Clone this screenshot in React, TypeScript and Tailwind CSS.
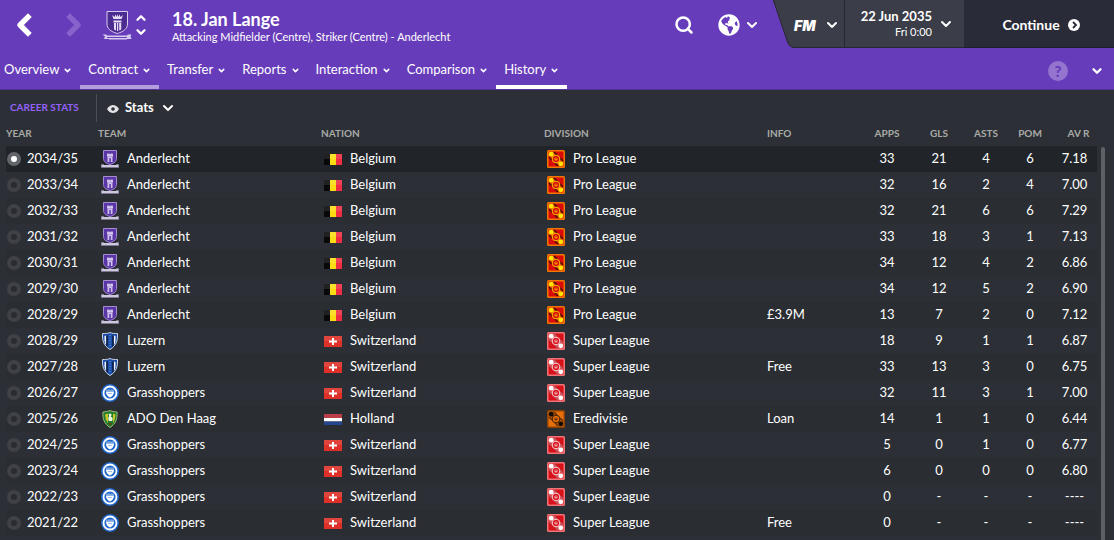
import { useState } from 'react';
import { ChevronDown, ChevronLeft, ChevronRight, ChevronUp, Search } from 'lucide-react';
import { FaGlobeAmericas } from 'react-icons/fa';

type Club = 'Anderlecht' | 'Luzern' | 'Grasshoppers' | 'ADO Den Haag';
type Nation = 'Belgium' | 'Switzerland' | 'Holland';
type Division = 'Pro League' | 'Super League' | 'Eredivisie';

interface Season {
  year: string;
  team: Club;
  nation: Nation;
  division: Division;
  info: string;
  stats: [string, string, string, string, string];
}

const seasons: Season[] = [
  { year: '2034/35', team: 'Anderlecht', nation: 'Belgium', division: 'Pro League', info: '', stats: ['33', '21', '4', '6', '7.18'] },
  { year: '2033/34', team: 'Anderlecht', nation: 'Belgium', division: 'Pro League', info: '', stats: ['32', '16', '2', '4', '7.00'] },
  { year: '2032/33', team: 'Anderlecht', nation: 'Belgium', division: 'Pro League', info: '', stats: ['32', '21', '6', '6', '7.29'] },
  { year: '2031/32', team: 'Anderlecht', nation: 'Belgium', division: 'Pro League', info: '', stats: ['33', '18', '3', '1', '7.13'] },
  { year: '2030/31', team: 'Anderlecht', nation: 'Belgium', division: 'Pro League', info: '', stats: ['34', '12', '4', '2', '6.86'] },
  { year: '2029/30', team: 'Anderlecht', nation: 'Belgium', division: 'Pro League', info: '', stats: ['34', '12', '5', '2', '6.90'] },
  { year: '2028/29', team: 'Anderlecht', nation: 'Belgium', division: 'Pro League', info: '£3.9M', stats: ['13', '7', '2', '0', '7.12'] },
  { year: '2028/29', team: 'Luzern', nation: 'Switzerland', division: 'Super League', info: '', stats: ['18', '9', '1', '1', '6.87'] },
  { year: '2027/28', team: 'Luzern', nation: 'Switzerland', division: 'Super League', info: 'Free', stats: ['33', '13', '3', '0', '6.75'] },
  { year: '2026/27', team: 'Grasshoppers', nation: 'Switzerland', division: 'Super League', info: '', stats: ['32', '11', '3', '1', '7.00'] },
  { year: '2025/26', team: 'ADO Den Haag', nation: 'Holland', division: 'Eredivisie', info: 'Loan', stats: ['14', '1', '1', '0', '6.44'] },
  { year: '2024/25', team: 'Grasshoppers', nation: 'Switzerland', division: 'Super League', info: '', stats: ['5', '0', '1', '0', '6.77'] },
  { year: '2023/24', team: 'Grasshoppers', nation: 'Switzerland', division: 'Super League', info: '', stats: ['6', '0', '0', '0', '6.80'] },
  { year: '2022/23', team: 'Grasshoppers', nation: 'Switzerland', division: 'Super League', info: '', stats: ['0', '-', '-', '-', '----'] },
  { year: '2021/22', team: 'Grasshoppers', nation: 'Switzerland', division: 'Super League', info: 'Free', stats: ['0', '-', '-', '-', '----'] },
];

const tabs = ['Overview', 'Contract', 'Transfer', 'Reports', 'Interaction', 'Comparison', 'History'];

const divisionColors: Record<Division, { border: string; base: string; mark: string; line: string }> = {
  'Pro League': { border: '#f07800', base: '#d80a0a', mark: '#ffe600', line: '#4a0a04' },
  'Super League': { border: '#ef7478', base: '#d8101a', mark: '#ffffff', line: '#b85a60' },
  Eredivisie: { border: '#8a4206', base: '#e8700a', mark: '#140a04', line: '#6a3206' },
};

function HeaderCrest() {
  return (
    <svg viewBox="0 0 30 30" className="w-[30px] h-[30px]" fill="none">
      <path d="M5 1.500h20.500v12.500c0 4.500-3.500 7.500-10.200 9.500C8.500 21.500 5 18.500 5 14z" fill="#4d2c91" stroke="#d8ccee" />
      <path d="M10 5l1.500 4h8L21 5l-2.500 2-1-2.500-1.200 2.500-.8-3-.8 3-1.200-2.500-1 2.500z" fill="#e6def5" />
      <path d="M11.500 10.500h8v2h-8zM12 13h2v7.500l-2-1zM15 13h1.200v8H15zM17.200 13h2v6.500l-2 1z" fill="#e6def5" />
      <path d="M.5 24.500h4v1h21v-1h4l-1 2 1 2.500h-4.500v.5h-18V29h-5l1-2.500z" fill="#d8ccee" />
      <path d="M5 27.500h20" stroke="#673cba" />
    </svg>
  );
}

function ClubBadge({ club }: { club: Club }) {
  if (club === 'Anderlecht') {
    return (
      <svg viewBox="0 0 18 18" className="w-[18px] h-[18px]">
        <path d="M2.500.5h13v8c0 3-2.200 4.800-6.500 6C4.700 13.300 2.500 11.500 2.500 8.500z" fill="#5a35a5" stroke="#a48dd0" />
        <path d="M6 3l1 1.500L7.800 3 9 4.500 10.200 3l.8 1.500L12 3v3.500H6z" fill="#d5c8ee" />
        <path d="M6.500 6.500h5v5.500H9.800V8H8.300v4H6.500z" fill="#cfc0ec" />
        <path d="M0 14.500h3v.5h12v-.5h3l-.5 1.500.5 1.500H0L.5 16z" fill="#cfc6e2" />
      </svg>
    );
  }
  if (club === 'Luzern') {
    return (
      <svg viewBox="0 0 18 18" className="w-[18px] h-[18px]">
        <path d="M9 .5c2 1 4.500 1 7.500 1 .3 7-1 12-7.500 16C2.500 13.500 1.200 8.500 1.500 1.500c3 0 5.500 0 7.500-1z" fill="#1a4eaa" stroke="#cdd5e4" />
        <path d="M3.500 4v4.500c.3 2 .8 3.500 1.800 5V3.500z" fill="#f2f5fa" />
        <path d="M14.500 4v4.500c-.3 2-.8 3.500-1.800 5V3.500z" fill="#f2f5fa" />
        <path d="M5.300 3.500h1.400V15l-1.400-1.500zM11.300 3.500h1.400v10L11.300 15z" fill="#0a1530" />
        <path d="M9 3v12" stroke="#7da0dc" strokeDasharray="1 1.500" />
      </svg>
    );
  }
  if (club === 'Grasshoppers') {
    return (
      <svg viewBox="0 0 18 18" className="w-[18px] h-[18px]">
        <circle cx="9" cy="9" r="9" fill="#2166cc" />
        <circle cx="9" cy="9" r="6.500" fill="#2166cc" stroke="#fff" strokeWidth="1.800" />
        <path d="M5 5.500h8V7H5z" fill="#7aa7e2" />
        <path d="M5 7.500h8c0 2.800-1.500 5-4 6-2.500-1-4-3.200-4-6z" fill="#fff" />
        <path d="M7 9.500h4" stroke="#9dbfee" />
      </svg>
    );
  }
  return (
    <svg viewBox="0 0 18 18" className="w-[18px] h-[18px]">
      <path d="M9 .5c2 1 4.500 1.200 7 1.500.5 6.500-1 11.500-7 15.500C3 13.500 1.500 8.500 2 2 4.500 1.700 7 1.500 9 .5z" fill="#1d7d2c" stroke="#a4b878" />
      <path d="M4 4.500l3-1V13l-2-3z" fill="#c9c628" />
      <path d="M12 3.500l2.500 1-.5 4-2 5z" fill="#c9c628" />
      <path d="M7.500 4c2-1.500 3.500 0 3 1.500l-1 1c2 .5 3 2.500 1.500 4.500H8c-1-1.500-.8-4 .2-5z" fill="#f0f3e4" />
      <path d="M7 13h4l-2 2.500z" fill="#7a3a10" />
    </svg>
  );
}

function Flag({ nation }: { nation: Nation }) {
  return (
    <svg viewBox="0 0 18 11" className="w-[18px] h-[11px]">
      {nation === 'Belgium' && (
        <>
          <path d="M0 0h6v11H0z" fill="#080808" />
          <path d="M6 0h6v11H6z" fill="#fadc14" />
          <path d="M12 0h6v11h-6z" fill="#ee2c42" />
        </>
      )}
      {nation === 'Switzerland' && (
        <>
          <path d="M0 0h18v11H0z" fill="#de2f28" />
          <path d="M8 2h2v2.500h3v2h-3V9H8V6.500H5v-2h3z" fill="#fff" />
        </>
      )}
      {nation === 'Holland' && (
        <>
          <path d="M0 0h18v4H0z" fill="#b32734" />
          <path d="M0 4h18v3.500H0z" fill="#fff" />
          <path d="M0 7.500h18V11H0z" fill="#24458f" />
        </>
      )}
      <path d="M0 0h18v5H0z" fill="#fff" opacity="0.1" />
    </svg>
  );
}

function DivisionBadge({ division }: { division: Division }) {
  const c = divisionColors[division];
  return (
    <svg viewBox="0 0 18 18" className="w-[18px] h-[18px]">
      <rect width="18" height="18" rx="1.500" fill={c.border} />
      <path d="M1.500 1.500h15v15h-15z" fill={c.base} />
      <path d="M1.500 6.500V1.500h5l10 10v5h-5z" fill={c.border} opacity="0.6" />
      <path d="M7 2l3 3M13 8l3 3M2 7l3 3M8 13l3 3" stroke={c.line} strokeWidth="1.500" />
      <circle cx="4.200" cy="4.200" r="2.400" fill={c.mark} />
      <circle cx="13.800" cy="13.800" r="2.400" fill={c.mark} />
      <circle cx="9" cy="9" r="3.800" fill={c.base} stroke={c.mark} strokeWidth="0.800" />
      <circle cx="9" cy="9" r="1.600" fill={c.mark} opacity="0.8" />
      <path d="M8 8.200h2L9 10z" fill={c.base} />
    </svg>
  );
}

export default function App() {
  const [selected, setSelected] = useState(0);

  return (
    <div className="h-screen flex flex-col overflow-hidden bg-[#2c3036] font-['Lato','Noto_Sans',sans-serif] text-white">
      <header className="shrink-0 bg-[#673cba] border-b border-[#553399]">
        <div className="flex items-start justify-between h-12">
          <div className="flex items-center h-12 pt-0.5 pl-2">
            <button aria-label="Back" className="w-8">
              <ChevronLeft className="w-8 h-8" strokeWidth={4} strokeLinecap="square" />
            </button>
            <button aria-label="Forward" className="w-8 ml-[18px] text-[#8863cc]">
              <ChevronRight className="w-8 h-8" strokeWidth={4} strokeLinecap="square" />
            </button>
            <div className="ml-3">
              <HeaderCrest />
            </div>
            <div className="flex flex-col ml-0.5">
              <button aria-label="Previous player">
                <ChevronUp className="w-3.5 h-3.5" strokeWidth={4} />
              </button>
              <button aria-label="Next player">
                <ChevronDown className="w-3.5 h-3.5" strokeWidth={4} />
              </button>
            </div>
            <div className="pt-1 ml-6">
              <h1 className="text-[18px] leading-5 font-bold">18. Jan Lange</h1>
              <p className="text-[11px] leading-4">Attacking Midfielder (Centre), Striker (Centre) - Anderlecht</p>
            </div>
          </div>

          <div className="flex h-12">
            <div className="flex items-center gap-6 pt-0.5 pr-3">
              <button aria-label="Search">
                <Search className="w-5 h-5" strokeWidth={3} />
              </button>
              <button aria-label="World" className="flex items-center gap-1">
                <FaGlobeAmericas className="w-[22px] h-[22px]" />
                <ChevronDown className="w-4 h-4" strokeWidth={3} />
              </button>
            </div>
            <div className="relative flex h-12 w-[72px]">
              <svg viewBox="0 0 74 48" preserveAspectRatio="none" className="absolute inset-0 w-full h-full">
                <path d="M1 -1L16 42Q18 47.500 23 47.500H75V-1z" fill="#3b3d48" stroke="#27272f" />
              </svg>
              <button aria-label="FM menu" className="relative flex items-center gap-2 pt-0.5 ml-[22px]">
                <span className="font-['Inter','Lato',sans-serif] text-[14px] font-black italic">FM</span>
                <ChevronDown className="w-4 h-4" strokeWidth={3} />
              </button>
            </div>
            <button className="flex items-center justify-end gap-1.5 w-[120px] pr-2.5 bg-[#3b3d48] border-l border-b border-[#27272f]">
              <span className="text-right">
                <span className="block text-[13px] leading-4 font-bold">22 Jun 2035</span>
                <span className="block text-[11px] leading-4">Fri 0:00</span>
              </span>
              <ChevronDown className="w-4 h-4" strokeWidth={3} />
            </button>
            <button className="flex items-center justify-center gap-2 w-[150px] pt-0.5 pl-1 bg-[#292b38] border-b border-[#1d1e28] text-[14px] font-bold">
              Continue
              <svg viewBox="0 0 12 12" className="w-3 h-3">
                <circle cx="6" cy="6" r="6" fill="#fff" />
                <path d="M5 3l3 3-3 3" fill="none" stroke="#292b38" strokeWidth="1.800" />
              </svg>
            </button>
          </div>
        </div>

        <nav className="flex items-stretch justify-between h-[41px]">
          <div className="flex -ml-1">
            {tabs.map((tab) => (
              <button
                key={tab}
                className={`flex items-center gap-1 px-2 pt-1.5 border-b-4 text-[13px] ${
                  tab === 'History' ? 'border-white' : tab === 'Contract' ? 'border-[#b39ddc]' : 'border-transparent'
                }`}
              >
                {tab}
                <ChevronDown className="w-[9px] h-[9px] mt-0.5" strokeWidth={4} />
              </button>
            ))}
          </div>
          <div className="flex items-center gap-[22px] pt-1 pr-2.5">
            <button aria-label="Help" className="w-5 h-5 rounded-full bg-[#9474cf] text-[#673cba] text-[15px] leading-5 font-black">
              ?
            </button>
            <button aria-label="More">
              <ChevronDown className="w-3.5 h-3.5" strokeWidth={4} />
            </button>
          </div>
        </nav>
      </header>

      <div className="flex items-center shrink-0 h-[31px] pt-1">
        <h2 className="w-24 pl-2.5 text-[10px] font-bold text-[#9461fc] whitespace-nowrap">CAREER STATS</h2>
        <div className="w-px h-7 bg-[#4b4e54]" />
        <button className="flex items-center gap-1.5 ml-2.5 text-[13px] font-bold">
          <svg viewBox="0 0 12 8" className="w-3 h-2 mt-0.5">
            <path d="M0 4C2 1 4 0 6 0s4 1 6 4c-2 3-4 4-6 4S2 7 0 4z" fill="#e4e4e6" />
            <circle cx="6" cy="4" r="1.800" fill="#2c3036" />
          </svg>
          Stats
          <ChevronDown className="w-4 h-4" strokeWidth={3} />
        </button>
      </div>

      <main className="flex flex-1 min-h-0 pl-1.5 pr-[9px]">
        <div className="flex-1 min-w-0 overflow-hidden">
          <table className="w-full table-fixed text-left text-[13px]">
            <colgroup>
              <col className="w-[92px]" />
              <col />
              <col />
              <col />
              <col className="w-[93px]" />
              <col className="w-[54px]" />
              <col className="w-[50px]" />
              <col className="w-11" />
              <col className="w-11" />
              <col className="w-[45px]" />
            </colgroup>
            <thead>
              <tr className="h-[25px] text-[10px] text-[#a9aaa6]">
                {['YEAR', 'TEAM', 'NATION', 'DIVISION', 'INFO'].map((label) => (
                  <th key={label} className="p-0 font-bold">{label}</th>
                ))}
                {['APPS', 'GLS', 'ASTS', 'POM'].map((label) => (
                  <th key={label} className="p-0 font-bold text-center">{label}</th>
                ))}
                <th className="p-0 pl-2 font-bold text-center">AV R</th>
              </tr>
            </thead>
            <tbody>
              {seasons.map((season, index) => (
                <tr key={index} className={`h-[26px] ${selected === index ? 'bg-[#212529]' : index % 2 ? '' : 'bg-[#2a2e33]'}`}>
                  <td className="p-0">
                    <label className="flex items-center gap-1.5 pl-px">
                      <input
                        type="radio"
                        name="season"
                        checked={selected === index}
                        onChange={() => setSelected(index)}
                        className="appearance-none w-3.5 h-3.5 rounded-full border-4 border-[#3f4147] bg-[#292b30] checked:border-[#62656a] checked:bg-white"
                      />
                      {season.year}
                    </label>
                  </td>
                  <td className="p-0">
                    <div className="flex items-center gap-2 pl-[3px]">
                      <ClubBadge club={season.team} />
                      {season.team}
                    </div>
                  </td>
                  <td className="p-0">
                    <div className="flex items-center gap-2 pl-[3px]">
                      <Flag nation={season.nation} />
                      {season.nation}
                    </div>
                  </td>
                  <td className="p-0">
                    <div className="flex items-center gap-2 pl-[3px]">
                      <DivisionBadge division={season.division} />
                      {season.division}
                    </div>
                  </td>
                  <td className="p-0">{season.info}</td>
                  {season.stats.map((value, i) => (
                    <td key={i} className="p-0 text-center">{value}</td>
                  ))}
                </tr>
              ))}
            </tbody>
          </table>
        </div>
        <div className="w-1 mt-[26px] ml-1 rounded-t bg-[#5d6065]" />
      </main>
    </div>
  );
}
